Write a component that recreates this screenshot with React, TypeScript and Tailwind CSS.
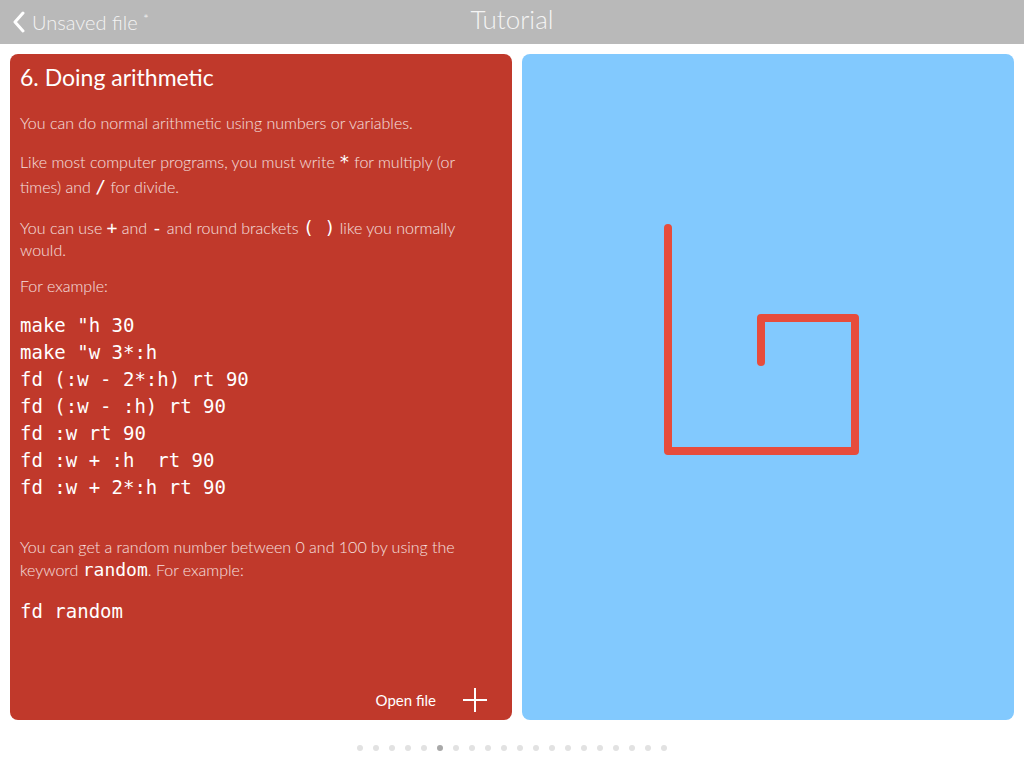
const codeLines = [
  'make "h 30',
  'make "w 3*:h',
  'fd (:w - 2*:h) rt 90',
  'fd (:w - :h) rt 90',
  'fd :w rt 90',
  'fd :w + :h  rt 90',
  'fd :w + 2*:h rt 90',
]

const mono = "font-['DejaVu_Sans_Mono',monospace]"

function Code({ children }: { children: string }) {
  return <span className={`${mono} text-[18px] text-white`}>{children}</span>
}

export default function App() {
  return (
    <div className="flex h-screen w-full flex-col bg-white font-['Lato',sans-serif]">
      <header className="relative flex h-[44px] shrink-0 items-center bg-[#b9b9b9]">
        <div className="flex items-center pl-[12px]">
          <svg width="14" height="22" viewBox="0 0 14 22" className="mr-[6px]">
            <polyline
              points="11,2 3,11 11,20"
              fill="none"
              stroke="#ffffff"
              strokeWidth="3"
              strokeLinecap="round"
              strokeLinejoin="round"
            />
          </svg>
          <span className="text-[20px] font-light text-[#f4f4f4]">
            Unsaved file <span className="text-[14px] align-[6px]">*</span>
          </span>
        </div>
        <div className="absolute inset-x-0 top-0 flex h-[38px] items-center justify-center text-[26px] font-light text-[#f4f4f4] pointer-events-none">
          Tutorial
        </div>
      </header>

      <main className="flex h-[676px] shrink-0 gap-[10px] px-[10px] pt-[10px]">
        <section className="flex w-[502px] flex-col rounded-[8px] bg-[#c0392b] pl-[10px] pr-[40px] pt-[8px]">
          <h1 className="text-[23px] leading-[30px] text-white">6. Doing arithmetic</h1>
          <p className="mt-[20px] text-[16px] font-light leading-[22px] text-white/85">
            You can do normal arithmetic using numbers or variables.
          </p>
          <p className="mt-[15px] text-[16px] font-light leading-[25px] text-white/85">
            Like most computer programs, you must write <Code>*</Code> for multiply (or times) and{' '}
            <Code>/</Code> for divide.
          </p>
          <p className="mt-[18px] text-[16px] font-light leading-[22px] text-white/85">
            You can use <Code>+</Code> and <Code>-</Code> and round brackets <Code>( )</Code> like you
            normally would.
          </p>
          <p className="mt-[14px] text-[16px] font-light leading-[22px] text-white/85">For example:</p>
          <pre className={`mt-[15px] ${mono} text-[19px] leading-[27px] text-white`}>
            {codeLines.join('\n')}
          </pre>
          <p className="mt-[34px] text-[16px] font-light leading-[23px] text-white/85">
            You can get a random number between 0 and 100 by using the keyword <Code>random</Code>. For
            example:
          </p>
          <pre className={`mt-[17px] ${mono} text-[19px] leading-[27px] text-white`}>fd random</pre>
          <div className="-mr-[15px] mt-auto flex h-[40px] items-center justify-end gap-[27px]">
            <span className="text-[15px] text-white">Open file</span>
            <svg width="24" height="24" viewBox="0 0 24 24">
              <path d="M12 0v24M0 12h24" stroke="#ffffff" strokeWidth="2" />
            </svg>
          </div>
        </section>

        <section className="flex-1 rounded-[8px] bg-[#82c9fe]">
          <svg width="492" height="666" viewBox="0 0 492 666">
            <polyline
              points="239,308 239,264 333,264 333,397 146,397 146,174"
              fill="none"
              stroke="#e74c3c"
              strokeWidth="8"
              strokeLinecap="round"
              strokeLinejoin="round"
            />
          </svg>
        </section>
      </main>

      <footer className="flex flex-1 justify-center gap-[10px] pt-[25px]">
        {Array.from({ length: 20 }).map((_, i) => (
          <span
            key={i}
            className={`h-[6px] w-[6px] rounded-full ${i === 5 ? 'bg-[#a9a9a9]' : 'bg-[#e2e2e2]'}`}
          />
        ))}
      </footer>
    </div>
  )
}
